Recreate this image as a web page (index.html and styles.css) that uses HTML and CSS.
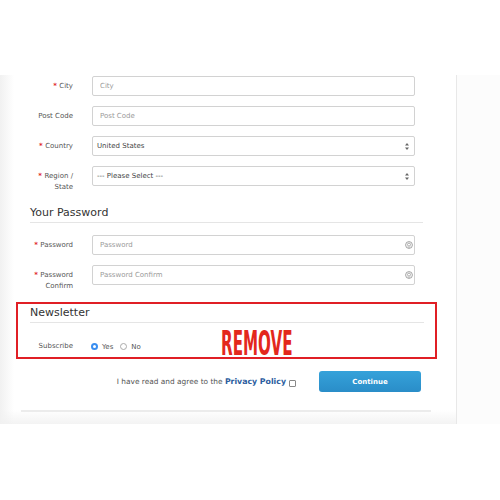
FILE: index.html
```html
<!DOCTYPE html>
<html lang="en">
  <head>
    <meta charset="UTF-8" />
    <meta name="viewport" content="width=device-width, initial-scale=1.0" />
    <title>Register Account</title>
    <link rel="stylesheet" href="styles.css">
  </head>
  <body>
    <div class="page">
      <main class="panel">
        <form class="register">
          <div class="row">
            <label class="label required" for="city">City</label>
            <input class="field" type="text" id="city" placeholder="City" />
          </div>
          <div class="row">
            <label class="label" for="postcode">Post Code</label>
            <input class="field" type="text" id="postcode" placeholder="Post Code" />
          </div>
          <div class="row">
            <label class="label required" for="country">Country</label>
            <div class="select">
              <span>United States</span>
              <svg class="arrows" width="4" height="7" viewBox="0 0 4 7">
                <path d="M2 0 L4 2.6 L0 2.6 Z M2 7 L4 4.4 L0 4.4 Z" fill="#666" />
              </svg>
            </div>
          </div>
          <div class="row">
            <label class="label required" for="zone">Region /<br />State</label>
            <div class="select">
              <span>--- Please Select ---</span>
              <svg class="arrows" width="4" height="7" viewBox="0 0 4 7">
                <path d="M2 0 L4 2.6 L0 2.6 Z M2 7 L4 4.4 L0 4.4 Z" fill="#666" />
              </svg>
            </div>
          </div>

          <h2 class="legend">Your Password</h2>

          <div class="row">
            <label class="label required" for="password">Password</label>
            <div class="pass">
              <input class="field" type="password" id="password" placeholder="Password" />
              <svg class="key" width="8" height="8" viewBox="0 0 8 8">
                <circle cx="4" cy="4" r="3.4" fill="none" stroke="#999" stroke-width="0.9" />
                <circle cx="4" cy="3.6" r="1.5" fill="none" stroke="#999" stroke-width="0.8" />
                <path d="M3 5.6 L4 6.6 L5 5.6" fill="none" stroke="#999" stroke-width="0.8" />
              </svg>
            </div>
          </div>
          <div class="row">
            <label class="label required" for="confirm">Password<br />Confirm</label>
            <div class="pass">
              <input class="field" type="password" id="confirm" placeholder="Password Confirm" />
              <svg class="key" width="8" height="8" viewBox="0 0 8 8">
                <circle cx="4" cy="4" r="3.4" fill="none" stroke="#999" stroke-width="0.9" />
                <circle cx="4" cy="3.6" r="1.5" fill="none" stroke="#999" stroke-width="0.8" />
                <path d="M3 5.6 L4 6.6 L5 5.6" fill="none" stroke="#999" stroke-width="0.8" />
              </svg>
            </div>
          </div>

          <fieldset class="newsletter">
            <h2 class="legend legend--box">Newsletter</h2>
            <div class="row row--box">
              <span class="label label--box">Subscribe</span>
              <div class="options">
                <span class="radio radio--on"></span><span class="opt">Yes</span>
                <span class="radio"></span><span class="opt">No</span>
              </div>
            </div>
            <span class="stamp">REMOVE</span>
          </fieldset>

          <div class="terms">
            <span class="agree">I have read and agree to the <b class="policy">Privacy Policy</b></span>
            <span class="check"></span>
            <button type="button" class="continue">Continue</button>
          </div>
        </form>
        <hr class="rule" />
      </main>
    </div>
  </body>
</html>
```

FILE: styles.css
```css
body {
  margin: 0;
  background-color: #fff;
  font-family: "DejaVu Sans", Verdana, sans-serif;
  font-size: 7px;
  color: #555;
}

.page {
  margin-top: 75px;
  display: flex;
  background-color: #fcfcfc;
}

.panel {
  width: 457px;
  box-sizing: border-box;
  padding: 1px 0 12px;
  border-right: 1px solid #e8e8e8;
  background:
    linear-gradient(to right, #f1f1f1, rgba(255, 255, 255, 0) 14px),
    linear-gradient(to bottom, #fff calc(100% - 14px), #f3f3f3);
}

.register {
  display: flex;
  flex-direction: column;
}

.row {
  display: flex;
  align-items: flex-start;
  margin-bottom: 10px;
}

.label {
  width: 73px;
  flex: none;
  box-sizing: border-box;
  padding-top: 5px;
  margin-right: 19px;
  line-height: 11px;
  text-align: right;
  color: #555;
}

.required::before {
  content: "* ";
  color: #e0262b;
  font-weight: bold;
}

.field {
  width: 323px;
  height: 20px;
  box-sizing: border-box;
  margin: 0;
  padding: 0 7px;
  border: 1px solid #d2d2d2;
  border-radius: 2px;
  font-family: inherit;
  font-size: 7px;
  color: #555;
  background-color: #fff;
}

.field::placeholder {
  color: #9a9a9a;
}

.select {
  width: 323px;
  height: 20px;
  box-sizing: border-box;
  display: flex;
  align-items: center;
  justify-content: space-between;
  padding: 0 4px 0 4px;
  border: 1px solid #d2d2d2;
  border-radius: 2px;
  color: #444;
  background-color: #fff;
}

.arrows {
  margin-right: 1px;
}

.pass {
  position: relative;
}

.key {
  position: absolute;
  right: 2px;
  top: 6px;
}

.legend {
  margin: 3px 0 12px 30px;
  width: 393px;
  padding-bottom: 2px;
  border-bottom: 1px solid #e5e5e5;
  font-size: 11px;
  line-height: 14px;
  font-weight: normal;
  color: #333;
}

.newsletter {
  position: relative;
  width: 421px;
  box-sizing: border-box;
  margin: 0 0 0 16px;
  padding: 2px 11px 1px 12px;
  border: 2px solid #e01f25;
  min-width: 0;
}

.legend--box {
  width: auto;
  margin: 0;
}

.row--box {
  margin: 13px 0 0;
}

.label--box {
  width: 43px;
  margin-right: 18px;
}

.options {
  display: flex;
  align-items: center;
  height: 20px;
  padding-top: 1px;
  box-sizing: border-box;
}

.radio {
  width: 7px;
  height: 7px;
  box-sizing: border-box;
  border: 1px solid #aaa;
  border-radius: 50%;
  background-color: #fff;
}

.radio--on {
  border: 2.5px solid #3a8ef0;
  background-color: #fff;
}

.opt {
  margin: 0 7px 0 4px;
  color: #555;
}

.stamp {
  position: absolute;
  left: 203px;
  top: 23px;
  font-family: "DejaVu Sans Condensed", "DejaVu Sans", sans-serif;
  font-weight: bold;
  font-size: 33px;
  line-height: 1;
  color: #e3281c;
  transform: scaleX(0.51);
  transform-origin: left top;
  white-space: nowrap;
}

.terms {
  display: flex;
  align-items: center;
  justify-content: flex-end;
  margin-top: 12px;
  padding-right: 35px;
}

.agree {
  font-size: 7.4px;
  color: #555;
}

.policy {
  font-size: 7.8px;
  color: #2b5c9e;
}

.check {
  width: 7px;
  height: 7px;
  box-sizing: border-box;
  margin: 3px 0 0 3px;
  border: 1px solid #888;
  border-radius: 1px;
  background-color: #fff;
}

.continue {
  width: 102px;
  height: 21px;
  margin-left: 23px;
  padding: 0;
  border: none;
  border-radius: 3px;
  background: linear-gradient(to bottom, #35a2da, #2a8dc8);
  color: #fff;
  font-family: inherit;
  font-size: 7px;
  font-weight: bold;
}

.rule {
  margin: 18px 25px 0 21px;
  height: 2px;
  border: none;
  background-color: #ececec;
}
```
